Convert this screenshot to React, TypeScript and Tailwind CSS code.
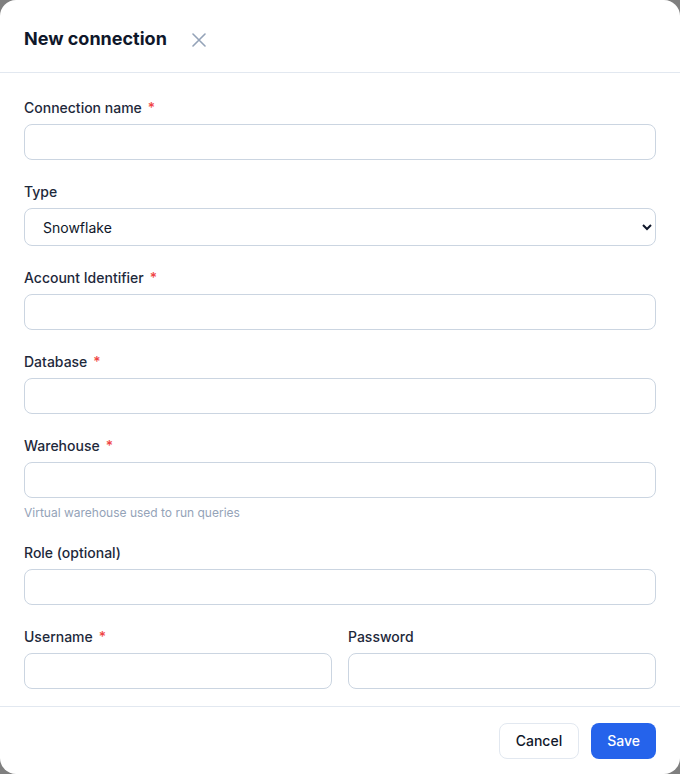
import React from "react";

function Label({ text, required }: { text: string; required?: boolean }) {
  return (
    <label className="mb-1 block text-sm leading-6 font-medium text-[#1e293b]">
      {text}
      {required && <span className="ml-1.5 text-[#ef4444]">*</span>}
    </label>
  );
}

function Input() {
  return (
    <input
      type="text"
      className="block h-9 w-full rounded-lg border border-[#cbd5e1] bg-white px-3 text-sm text-[#0f172a] outline-none"
    />
  );
}

export default function App() {
  return (
    <div
      className="h-[774px] w-[680px] bg-[#7f7f7f]"
      style={{ fontFamily: "Inter, 'Noto Sans', sans-serif" }}
    >
      <div className="flex h-full w-full flex-col rounded-2xl bg-white">
        <div className="flex h-[73px] shrink-0 items-center border-b border-[#e2e8f0] px-6 pt-[5px]">
          <h2 className="text-lg font-bold text-[#0f172a]">New connection</h2>
          <button className="ml-[25px] mt-[3px] flex items-center justify-center text-[#94a3b8]">
            <svg width="14" height="14" viewBox="0 0 14 14" fill="none" stroke="currentColor" strokeWidth="1.6" strokeLinecap="round">
              <path d="M1 1 13 13M13 1 1 13" />
            </svg>
          </button>
        </div>
        <div className="flex flex-1 flex-col gap-5 px-6 pt-[23px]">
          <div>
            <Label text="Connection name" required />
            <Input />
          </div>
          <div>
            <Label text="Type" />
            <select className="block h-[38px] w-full rounded-lg border border-[#cbd5e1] bg-white pl-3.5 pr-2 text-sm text-[#0f172a] outline-none">
              <option>Snowflake</option>
            </select>
          </div>
          <div>
            <Label text="Account Identifier" required />
            <Input />
          </div>
          <div>
            <Label text="Database" required />
            <Input />
          </div>
          <div>
            <Label text="Warehouse" required />
            <Input />
            <p className="mt-[7px] text-xs leading-4 text-[#94a3b8]">Virtual warehouse used to run queries</p>
          </div>
          <div>
            <Label text="Role (optional)" />
            <Input />
          </div>
          <div className="grid grid-cols-2 gap-4">
            <div>
              <Label text="Username" required />
              <Input />
            </div>
            <div>
              <Label text="Password" />
              <Input />
            </div>
          </div>
        </div>
        <div className="flex shrink-0 items-center justify-end gap-3 border-t border-[#e2e8f0] px-6 pt-4 pb-[15px]">
          <button className="h-9 rounded-lg border border-[#e2e8f0] bg-white px-4 text-sm font-medium text-[#0f172a]">
            Cancel
          </button>
          <button className="h-9 rounded-lg bg-[#2563eb] px-4 text-sm font-medium text-white">Save</button>
        </div>
      </div>
    </div>
  );
}
